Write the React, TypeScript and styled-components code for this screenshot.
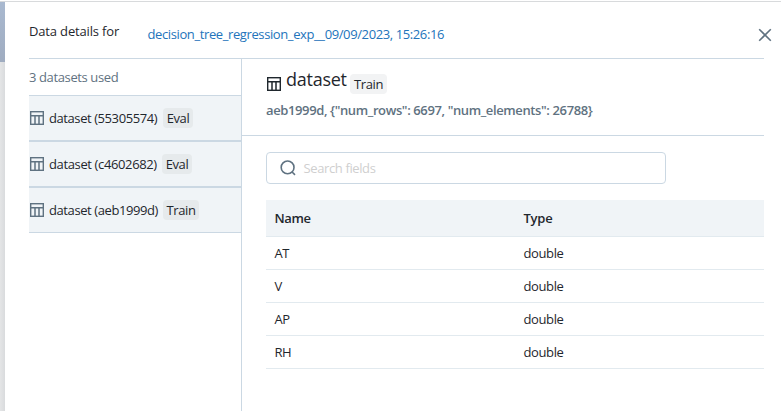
import React from "react";
import styled, { createGlobalStyle } from "styled-components";

const GlobalStyle = createGlobalStyle`
  *, *::before, *::after { box-sizing: border-box; }
  body {
    margin: 0;
    overflow: hidden;
    background: #fff;
    color: #1f272d;
    font-family: "Segoe UI", "Open Sans", "Noto Sans", sans-serif;
    font-size: 13px;
    line-height: 20px;
  }
`;

const Screen = styled.div`
  display: flex;
  height: 411px;
  padding-top: 1px;
`;

const Backdrop = styled.div`
  flex: 0 0 5px;
  display: flex;
  flex-direction: column;
  border-top: 1px solid #d8dadc;
`;

const BackdropBar = styled.div`
  height: 60px;
  background: linear-gradient(#a9b9d0, #9facc0);
`;

const BackdropPage = styled.div`
  flex: 1;
  background: linear-gradient(90deg, #e4e5e6, #d9dbdd);
`;

const Drawer = styled.section`
  flex: 1;
  min-width: 0;
  display: flex;
  flex-direction: column;
  border-top: 1px solid #d8dadc;
  padding: 0 17px 0 24px;
`;

const Header = styled.header`
  display: flex;
  height: 57px;
  flex: none;
  border-bottom: 1px solid #cbd8e3;
`;

const Label = styled.span<{ $spacing?: number }>`
  white-space: pre;
  letter-spacing: ${(p) => p.$spacing ?? 0}px;
`;

const Title = styled.div`
  width: 118.5px;
  padding-top: 19px;
  white-space: nowrap;
`;

const RunLink = styled.a`
  flex: 1;
  padding-top: 22px;
  color: #2374bb;
`;

const CloseButton = styled.button`
  width: 14px;
  height: 14px;
  margin: 26px -8px 0 0;
  padding: 0;
  border: 0;
  background: none;
  color: #5f7281;
  svg { display: block; }
`;

const Body = styled.div`
  flex: 1;
  display: flex;
  min-height: 0;
`;

const Sidebar = styled.aside`
  flex: 0 0 213px;
  border-right: 1px solid #cbd8e3;
`;

const Count = styled.div`
  height: 36px;
  padding-top: 8px;
  color: #5f7281;
`;

const DatasetRow = styled.div`
  display: flex;
  align-items: center;
  height: 46px;
  background: #f0f4f7;
  border: solid #cbd8e3;
  border-width: 1px 0;
`;

const RowIcon = styled.span`
  display: flex;
  margin: 0 5px 0 1px;
  color: #5f7281;
`;

const Tag = styled.span<{ $width: number; $plain?: boolean }>`
  width: ${(p) => p.$width}px;
  height: 20px;
  border-radius: 4px;
  text-align: center;
  background: ${(p) => (p.$plain ? "#f2f3f4" : "#e6eaec")};
`;

const RowName = styled.span<{ $width: number }>`
  width: ${(p) => p.$width}px;
  white-space: nowrap;
`;

const Main = styled.main`
  flex: 1;
  min-width: 0;
`;

const Summary = styled.div`
  height: 77px;
  padding: 9px 0 0 24px;
  border-bottom: 1px solid #cbd8e3;
`;

const SummaryTop = styled.div`
  display: flex;
  height: 26px;
`;

const SummaryIcon = styled.span`
  display: flex;
  margin: 9px 5px 0 1px;
`;

const Name = styled.h2`
  width: 64px;
  margin: 0;
  font-size: 18px;
  line-height: 22px;
  font-weight: 400;
`;

const TagSlot = styled.div`
  display: flex;
  padding-top: 6px;
`;

const Meta = styled.div`
  padding-top: 6px;
  color: #5f7281;
  font-weight: 600;
`;

const Content = styled.div`
  padding: 16px 0 0 24px;
`;

const SearchBox = styled.div`
  display: flex;
  align-items: center;
  width: 400px;
  height: 32px;
  padding-left: 12.5px;
  gap: 8px;
  border: 1px solid #cbd8e3;
  border-radius: 4px;
  color: #5f7281;
`;

const Placeholder = styled.span`
  color: #cfcfcf;
`;

const Table = styled.div`
  margin-top: 16px;
`;

const TableRow = styled.div<{ $head?: boolean }>`
  display: grid;
  grid-template-columns: 249px 1fr;
  align-items: center;
  height: ${(p) => (p.$head ? 37 : 33)}px;
  padding-left: 8.4px;
  border-bottom: 1px solid #e2eaef;
  background: ${(p) => (p.$head ? "#f0f4f7" : "#fff")};
  font-weight: ${(p) => (p.$head ? 600 : 400)};
`;

const TableIcon = () => (
  <svg width="14" height="14" viewBox="0 0 14 14" fill="none" stroke="currentColor">
    <rect x="0.7" y="0.7" width="12.6" height="12.6" strokeWidth="1.4" />
    <path d="M1 4.7H13M5 4.7V13M9 4.7V13" strokeWidth="1.5" />
  </svg>
);

const SearchIcon = () => (
  <svg width="16" height="16" viewBox="0 0 16 16" fill="none" stroke="currentColor" strokeWidth="1.6">
    <circle cx="7.6" cy="7.4" r="6.4" />
    <path d="M12.1 12L15 14.8" />
  </svg>
);

const datasets = [
  { id: "55305574", tag: "Eval", nameWidth: 114, tagWidth: 30, spacing: -0.42 },
  { id: "c4602682", tag: "Eval", nameWidth: 113, tagWidth: 30, spacing: -0.37 },
  { id: "aeb1999d", tag: "Train", nameWidth: 114, tagWidth: 36, spacing: -0.41 },
];

const fields = ["AT", "V", "AP", "RH"];

export default function App() {
  return (
    <>
      <GlobalStyle />
      <Screen>
        <Backdrop>
          <BackdropBar />
          <BackdropPage />
        </Backdrop>
        <Drawer>
          <Header>
            <Title><Label $spacing={-0.16}>Data details for</Label></Title>
            <RunLink><Label $spacing={-0.39}>decision_tree_regression_exp__09/09/2023, 15:26:16</Label></RunLink>
            <CloseButton aria-label="Close">
              <svg width="14" height="14" viewBox="0 0 14 14" fill="none" stroke="currentColor" strokeWidth="1.6">
                <path d="M1.2 1.2L12.8 12.8M12.8 1.2L1.2 12.8" />
              </svg>
            </CloseButton>
          </Header>
          <Body>
            <Sidebar>
              <Count><Label $spacing={-0.38}>3 datasets used</Label></Count>
              {datasets.map((d) => (
                <DatasetRow key={d.id}>
                  <RowIcon><TableIcon /></RowIcon>
                  <RowName $width={d.nameWidth}><Label $spacing={d.spacing}>{`dataset (${d.id})`}</Label></RowName>
                  <Tag $width={d.tagWidth}><Label $spacing={-0.4}>{d.tag}</Label></Tag>
                </DatasetRow>
              ))}
            </Sidebar>
            <Main>
              <Summary>
                <SummaryTop>
                  <SummaryIcon><TableIcon /></SummaryIcon>
                  <Name><Label $spacing={-0.25}>dataset</Label></Name>
                  <TagSlot><Tag $width={37} $plain><Label $spacing={-0.4}>Train</Label></Tag></TagSlot>
                </SummaryTop>
                <Meta><Label $spacing={-0.38}>{'aeb1999d, {"num_rows": 6697, "num_elements": 26788}'}</Label></Meta>
              </Summary>
              <Content>
                <SearchBox>
                  <SearchIcon />
                  <Placeholder><Label $spacing={-0.38}>Search fields</Label></Placeholder>
                </SearchBox>
                <Table>
                  <TableRow $head>
                    <Label $spacing={-0.3}>Name</Label>
                    <Label $spacing={-0.2}>Type</Label>
                  </TableRow>
                  {fields.map((f) => (
                    <TableRow key={f}>
                      <Label $spacing={-0.3}>{f}</Label>
                      <Label $spacing={-0.35}>double</Label>
                    </TableRow>
                  ))}
                </Table>
              </Content>
            </Main>
          </Body>
        </Drawer>
      </Screen>
    </>
  );
}
